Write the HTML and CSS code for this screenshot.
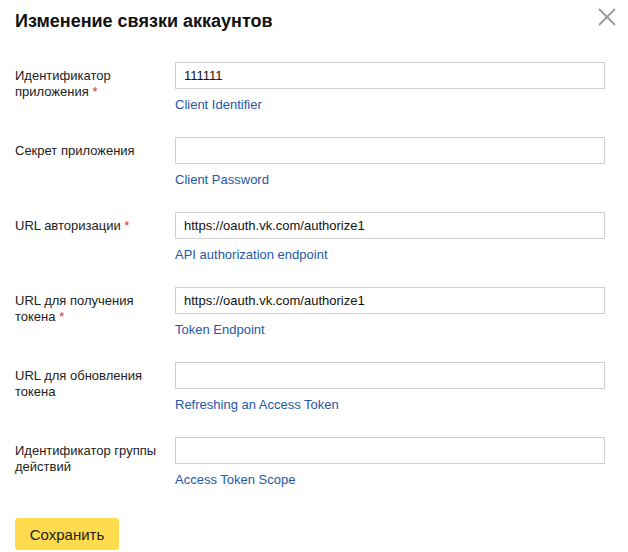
FILE: index.html
```html
<!DOCTYPE html>
<html lang="ru">
<head>
<meta charset="utf-8">
<title>Изменение связки аккаунтов</title>
<link rel="stylesheet" href="styles.css">
</head>
<body>
<div class="dialog">
  <div class="header">
    <h1 class="title">Изменение связки аккаунтов</h1>
    <button class="close" aria-label="Закрыть">
      <svg width="18" height="18" viewBox="0 0 18 18"><path d="M1 1L17 17M17 1L1 17" stroke="#9a9a9a" stroke-width="1.8" fill="none"/></svg>
    </button>
  </div>
  <div class="form">
    <div class="row">
      <div class="label">Идентификатор приложения <span class="req">*</span></div>
      <div class="field">
        <input class="input" type="text" value="111111">
        <a class="hint" href="#">Client Identifier</a>
      </div>
    </div>
    <div class="row">
      <div class="label">Секрет приложения</div>
      <div class="field">
        <input class="input" type="text" value="">
        <a class="hint" href="#">Client Password</a>
      </div>
    </div>
    <div class="row">
      <div class="label">URL авторизации <span class="req">*</span></div>
      <div class="field">
        <input class="input" type="text" value="https://oauth.vk.com/authorize1">
        <a class="hint" href="#">API authorization endpoint</a>
      </div>
    </div>
    <div class="row">
      <div class="label">URL для получения токена <span class="req">*</span></div>
      <div class="field">
        <input class="input" type="text" value="https://oauth.vk.com/authorize1">
        <a class="hint" href="#">Token Endpoint</a>
      </div>
    </div>
    <div class="row">
      <div class="label">URL для обновления токена</div>
      <div class="field">
        <input class="input" type="text" value="">
        <a class="hint" href="#">Refreshing an Access Token</a>
      </div>
    </div>
    <div class="row">
      <div class="label">Идентификатор группы действий</div>
      <div class="field">
        <input class="input" type="text" value="">
        <a class="hint" href="#">Access Token Scope</a>
      </div>
    </div>
  </div>
  <button class="save">Сохранить</button>
</div>
</body>
</html>
```

FILE: styles.css
```css
* { box-sizing: border-box; }
html, body { margin: 0; padding: 0; background: #fff; }
body {
  font-family: "Liberation Sans", Arial, sans-serif;
  color: #222;
  font-size: 13px;
}
.dialog {
  width: 628px;
  padding: 8px 15px 0 15px;
}
.header {
  display: flex;
  justify-content: space-between;
  align-items: flex-start;
  height: 54px;
}
.title {
  margin: 0;
  font-size: 18px;
  line-height: 26px;
  font-weight: bold;
  color: #111;
}
.close {
  border: 0;
  background: none;
  padding: 0;
  margin: 0 -3px 0 0;
  width: 18px;
  height: 18px;
  display: block;
}
.close svg { display: block; }
.form {
  display: flex;
  flex-direction: column;
  gap: 24px;
}
.row {
  display: grid;
  grid-template-columns: 160px 430px;
}
.label {
  padding-top: 6px;
  line-height: 16px;
  padding-right: 2px;
  color: #222;
}
.req { color: #e0302a; }
.field {
  display: flex;
  flex-direction: column;
  align-items: flex-start;
}
.input {
  width: 430px;
  height: 27px;
  border: 1px solid #cfcfcf;
  padding: 0 8px;
  font-family: "Liberation Sans", Arial, sans-serif;
  font-size: 13px;
  color: #111;
  outline: none;
  margin: 0;
}
.hint {
  margin-top: 8px;
  line-height: 16px;
  color: #2557a7;
  text-decoration: none;
}
.save {
  margin-top: 30px;
  width: 104px;
  height: 32px;
  border: 0;
  border-radius: 3px;
  background: #ffdb4d;
  font-family: "Liberation Sans", Arial, sans-serif;
  font-size: 15px;
  color: #222;
  padding: 0;
}
```
